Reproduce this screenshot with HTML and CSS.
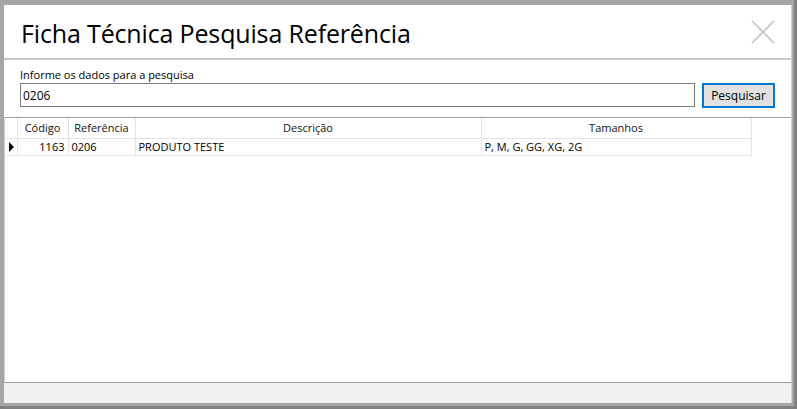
FILE: index.html
```html
<!DOCTYPE html>
<html lang="pt">
<head>
<meta charset="utf-8">
<title>Ficha Técnica Pesquisa Referência</title>
<link rel="stylesheet" href="styles.css">
</head>
<body>
<div class="shell">
  <div class="frame">
    <div class="titlebar">
      <h1 class="title">Ficha Técnica Pesquisa Referência</h1>
      <svg class="close" width="24" height="24" viewBox="0 0 24 24" aria-label="Fechar">
        <path d="M1 1 L23 23 M23 1 L1 23" stroke="#c4c4c4" stroke-width="1.6" fill="none"/>
      </svg>
    </div>
    <div class="form">
      <label class="label" for="q">Informe os dados para a pesquisa</label>
      <div class="searchrow">
        <input id="q" class="input" type="text" value="0206">
        <button class="btn" type="button">Pesquisar</button>
      </div>
    </div>
    <div class="grid">
      <table class="table">
        <colgroup>
          <col class="w-rh">
          <col class="w-cod">
          <col class="w-ref">
          <col class="w-desc">
          <col class="w-tam">
        </colgroup>
        <thead>
          <tr>
            <th class="c-rh"></th>
            <th>Código</th>
            <th>Referência</th>
            <th>Descrição</th>
            <th>Tamanhos</th>
          </tr>
        </thead>
        <tbody>
          <tr>
            <td class="c-rh"><span class="arrow"></span></td>
            <td class="num">1163</td>
            <td>0206</td>
            <td>PRODUTO TESTE</td>
            <td>P, M, G, GG, XG, 2G</td>
          </tr>
        </tbody>
      </table>
    </div>
    <div class="status"></div>
  </div>
</div>
</body>
</html>
```
FILE: styles.css
```css
html, body {
  margin: 0;
  padding: 0;
}
body {
  width: 797px;
  height: 409px;
  background: #808080;
  overflow: hidden;
  font-family: "Open Sans", "Noto Sans", sans-serif;
  color: #000;
}
.shell {
  width: 794px;
  height: 406px;
  background: #a6a6a6;
  box-sizing: border-box;
  padding: 5px 3px 3px 4px;
}
.frame {
  width: 787px;
  height: 398px;
  background: #fff;
  display: flex;
  flex-direction: column;
  border-right: 1px solid #d0d0d0;
}
.titlebar {
  height: 53px;
  display: flex;
  align-items: center;
  justify-content: space-between;
  padding: 0 16px 0 17px;
  border-bottom: 2px solid #c8c8c8;
}
.title {
  margin: 2px 0 0 0;
  font-weight: 400;
  font-size: 25px;
  letter-spacing: -0.15px;
  color: #000;
}
.close {
  display: block;
}
.form {
  height: 57px;
  padding: 7px 0 0 16px;
  box-sizing: border-box;
}
.label {
  display: block;
  font-size: 11px;
  line-height: 15px;
  height: 16px;
}
.searchrow {
  display: flex;
  align-items: flex-start;
  gap: 7px;
}
.input {
  width: 675px;
  height: 24px;
  box-sizing: border-box;
  border: 1px solid #7a7a7a;
  padding: 0 2px;
  font-family: inherit;
  font-size: 12px;
  margin: 0;
  outline: none;
  color: #000;
}
.btn {
  width: 73px;
  height: 25px;
  box-sizing: border-box;
  border: 2px solid #0078d7;
  background: #e1e1e1;
  font-family: inherit;
  font-size: 12px;
  padding: 0;
  margin: 0;
  color: #000;
}
.grid {
  flex: 1;
  border-top: 1px solid #a0a0a0;
  border-bottom: 1px solid #a0a0a0;
  border-left: 1px solid #d0d0d0;
}
.table {
  border-collapse: collapse;
  font-size: 11px;
  table-layout: fixed;
  width: 746px;
}
.w-rh { width: 12px; }
.w-cod { width: 51px; }
.w-ref { width: 67px; }
.w-desc { width: 346px; }
.w-tam { width: 270px; }
.table th, .table td {
  box-sizing: border-box;
  padding: 0 3px;
  white-space: nowrap;
  overflow: hidden;
  border-right: 1px solid #e4e4e4;
  border-bottom: 1px solid #e4e4e4;
  color: #000;
}
.table th {
  font-weight: 400;
  height: 20px;
  text-align: center;
  color: #111;
}
.table td {
  height: 17px;
  text-align: left;
}
.table .c-rh { padding: 0; }
.table .num { text-align: right; padding-right: 3px; }
.arrow {
  display: block;
  width: 0;
  height: 0;
  margin-left: 4px;
  border-top: 5px solid transparent;
  border-bottom: 5px solid transparent;
  border-left: 5px solid #000;
}
.status {
  height: 20px;
  background: #f0f0f0;
}
```
